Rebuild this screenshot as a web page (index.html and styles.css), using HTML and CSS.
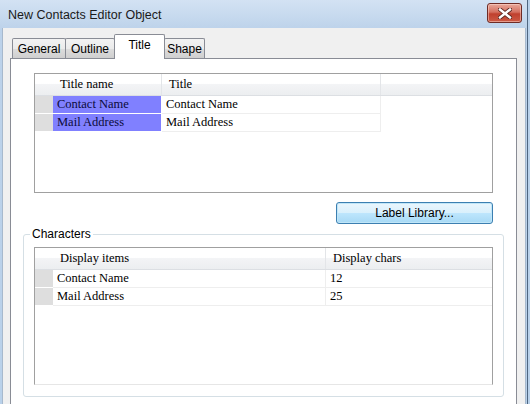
FILE: index.html
```html
<!DOCTYPE html>
<html lang="en">
<head>
  <meta charset="UTF-8" />
  <title>New Contacts Editor Object</title>
  <link rel="stylesheet" href="styles.css">
</head>
<body>
  <div class="window">
    <div class="titlebar">
      <span class="title">New Contacts Editor Object</span>
      <span class="close">
        <svg width="14" height="11" viewBox="0 0 14 11">
          <path d="M2 1.5 L12 9.5 M12 1.5 L2 9.5" stroke="#5a2620" stroke-width="4.2" stroke-linecap="square"/>
          <path d="M2 1.5 L12 9.5 M12 1.5 L2 9.5" stroke="#ffffff" stroke-width="2.4" stroke-linecap="square"/>
        </svg>
      </span>
    </div>

    <div class="client">
      <!-- tabs -->
      <div class="tabs">
        <div class="tab tab-general">General</div>
        <div class="tab tab-outline">Outline</div>
        <div class="tab tab-title active">Title</div>
        <div class="tab tab-shape">Shape</div>
      </div>

      <div class="panel">
        <!-- title list -->
        <div class="list list-titles">
          <div class="row head">
            <span class="rh"></span>
            <span class="cell">Title name</span>
            <span class="cell">Title</span>
            <span class="rest"></span>
          </div>
          <div class="row">
            <span class="rh"></span>
            <span class="cell sel">Contact Name</span>
            <span class="cell">Contact Name</span>
            <span class="rest"></span>
          </div>
          <div class="row">
            <span class="rh"></span>
            <span class="cell sel">Mail Address</span>
            <span class="cell">Mail Address</span>
            <span class="rest"></span>
          </div>
        </div>

        <div class="btn-row">
          <button class="btn">Label Library...</button>
        </div>

        <!-- characters group -->
        <fieldset class="group">
          <legend>Characters</legend>
          <div class="list list-chars">
            <div class="row head">
              <span class="rh"></span>
              <span class="cell">Display items</span>
              <span class="cell">Display chars</span>
            </div>
            <div class="row">
              <span class="rh"></span>
              <span class="cell">Contact Name</span>
              <span class="cell">12</span>
            </div>
            <div class="row">
              <span class="rh"></span>
              <span class="cell">Mail Address</span>
              <span class="cell">25</span>
            </div>
          </div>
        </fieldset>
      </div>
    </div>
  </div>
</body>
</html>
```

FILE: styles.css
```css
body {
  margin: 0;
  width: 530px;
  height: 404px;
  overflow: hidden;
  background: #b9d1ea;
  font-family: "Liberation Sans", Arial, sans-serif;
  font-size: 12px;
  color: #000;
}

.window {
  height: 404px;
  background: linear-gradient(to bottom, #d3e2f3, #bcd2ea 30px, #b9d1ea);
  border-right: 1px solid #4f6680;
  margin-right: 2px;
}

.titlebar {
  height: 28px;
  display: flex;
  align-items: center;
  justify-content: space-between;
  padding: 0 5px 0 8px;
}

.title {
  font-size: 12.5px;
  color: #1a1a1a;
  margin-top: 2px;
}

.close {
  width: 33px;
  height: 18px;
  margin-top: -2px;
  border: 1px solid #6e2b25;
  border-radius: 3px;
  background: linear-gradient(to bottom, #e9a99b, #d47060 45%, #c0402e 55%, #cc5a45);
  display: flex;
  align-items: center;
  justify-content: center;
  box-shadow: inset 0 0 0 1px rgba(255, 220, 210, 0.5);
}

.client {
  height: 376px;
  margin-left: 2px;
  margin-right: 1px;
  border-left: 1px solid #a7b9cd;
  border-right: 1px solid #a7b9cd;
  background: #f0f0f0;
  padding: 6px 0 0 7px;
  box-sizing: border-box;
}

/* tabs */
.tabs {
  display: flex;
  align-items: flex-end;
  height: 24px;
  padding-left: 2px;
  position: relative;
  z-index: 1;
}

.tab {
  height: 20px;
  box-sizing: border-box;
  border: 1px solid #898c95;
  border-bottom: none;
  border-radius: 2px 2px 0 0;
  background: linear-gradient(to bottom, #f3f3f3, #ebebeb 50%, #dddddd 50%, #cfcfcf);
  display: flex;
  align-items: center;
  justify-content: center;
  padding-top: 1px;
  margin-right: -1px;
}

.tab-general { width: 54px; }
.tab-outline { width: 50px; }
.tab-title { width: 51px; }
.tab-shape { width: 41px; }

.tab.active {
  height: 25px;
  background: #fff;
  margin-bottom: -1px;
  padding-bottom: 5px;
  position: relative;
  z-index: 2;
}

.panel {
  width: 505px;
  height: 331px;
  border: 1px solid #898c95;
  border-bottom: none;
  background: #fff;
  padding: 14px 0 0 0;
}

/* list views */
.list {
  width: 457px;
  border: 1px solid #a0a0a0;
  background: #fff;
  font-family: "Liberation Serif", "Times New Roman", serif;
  font-size: 12.5px;
}

.list-titles {
  height: 118px;
  margin-left: 23px;
}

.row {
  display: grid;
  height: 18px;
  align-items: stretch;
}

.list-titles .row {
  grid-template-columns: 18px 109px 219px 1fr;
}

.list-chars .row {
  grid-template-columns: 18px 273px 166px;
}

.row .rh {
  background: #dedede;
  border-bottom: 1px solid #fff;
}

.row .cell {
  padding-left: 4px;
  line-height: 17px;
  border-bottom: 1px solid #eeeeee;
  border-right: 1px solid #eeeeee;
  white-space: nowrap;
}

.list-chars .row .cell:last-child {
  border-right: none;
}

.row .cell.sel {
  background: #8080ff;
  border-bottom-color: #fff;
  border-right-color: #fff;
  color: #0b0b3a;
}

.row.head {
  height: 21px;
  background: linear-gradient(to bottom, #ffffff, #ffffff 45%, #f3f4f6 50%, #eceef0);
  border-bottom: 1px solid #dcdfe3;
}

.row.head .rh {
  background: transparent;
  border: none;
}

.row.head .cell {
  padding-left: 7px;
  line-height: 20px;
  border-bottom: none;
  border-right: 1px solid #e3e5e8;
}

.row.head .rest {
  border-bottom: none;
}

/* button */
.btn-row {
  display: flex;
  justify-content: flex-end;
  width: 482px;
  margin-top: 9px;
}

.btn {
  width: 157px;
  height: 22px;
  border: 1px solid #3c7fb1;
  border-radius: 3px;
  background: linear-gradient(to bottom, #eaf6fd, #d9f0fc 50%, #bee6fd 50%, #a7d9f5);
  box-shadow: inset 0 0 0 1px #c0e6f8;
  font-family: "Liberation Sans", Arial, sans-serif;
  font-size: 12px;
  padding: 0 0 1px 0;
  color: #000;
}

/* group box */
.group {
  width: 459px;
  margin: 3px 0 0 12px;
  padding: 6px 10px 11px 10px;
  border: 1px solid #d5dfe5;
  border-radius: 3px;
  box-shadow: inset 1px 1px 0 #fff;
}

.group legend {
  padding: 0 2px;
  margin-left: -4px;
  font-size: 12px;
  line-height: 14px;
}

.list-chars {
  height: 136px;
  border-bottom-color: #e6e6e6;
}
```
